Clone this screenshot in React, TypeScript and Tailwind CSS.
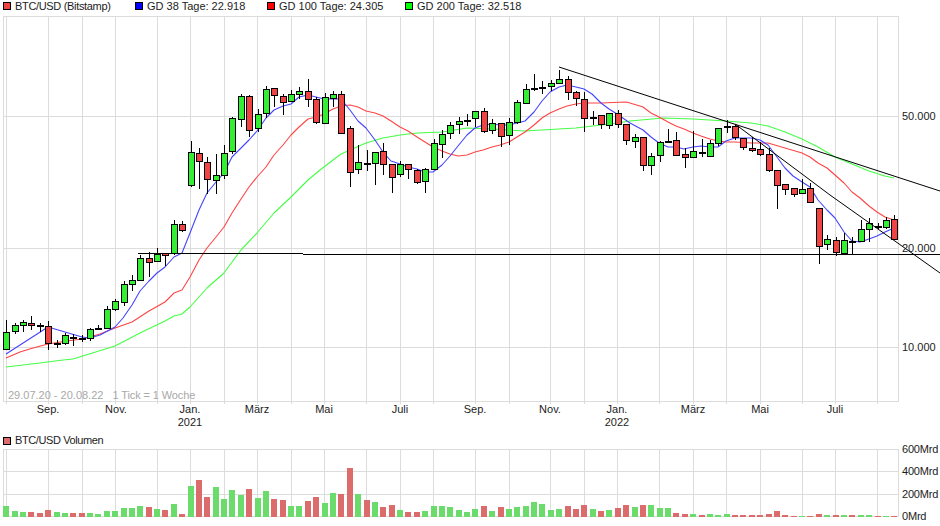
type C = [number, number, number, number, string];

const candles: C[] = [
  [332,349,320,349,"g"],[325,331,323,334,"g"],[322,325,320,332,"g"],[323,325,316,330,"r"],[325,327,323,332,"d"],[326,343,321,350,"r"],[343,345,340,348,"d"],[335,343,333,345,"g"],[337,338,334,346,"d"],[338,339,335,342,"d"],
  [329,338,328,341,"g"],[328,329,325,330,"d"],[309,328,306,328,"g"],[301,309,299,311,"g"],[284,302,281,306,"g"],[280,284,275,291,"g"],[258,280,255,280,"g"],[258,262,252,277,"r"],[254,261,248,262,"g"],[253,255,253,266,"r"],
  [224,253,220,255,"g"],[224,230,221,232,"r"],[152,185,141,187,"g"],[153,161,148,189,"r"],[162,179,157,194,"r"],[175,180,154,194,"g"],[153,175,145,179,"g"],[118,151,117,154,"g"],[96,119,94,127,"g"],[96,130,95,137,"r"],
  [114,128,109,132,"g"],[89,113,86,118,"g"],[88,95,88,107,"r"],[96,102,94,115,"r"],[94,101,90,102,"g"],[91,94,87,99,"g"],[91,99,79,107,"r"],[99,122,97,124,"r"],[97,123,93,123,"g"],[94,98,91,107,"g"],
  [94,133,91,133,"r"],[128,172,126,187,"r"],[162,169,145,174,"g"],[163,164,150,171,"d"],[152,163,152,185,"g"],[151,164,143,175,"r"],[164,177,164,193,"r"],[164,174,161,177,"g"],[164,169,164,179,"r"],[170,182,169,184,"r"],
  [169,181,168,193,"g"],[143,169,139,169,"g"],[134,144,130,158,"g"],[125,133,122,139,"g"],[121,124,117,134,"g"],[120,121,114,126,"d"],[111,118,111,127,"g"],[111,131,108,133,"r"],[123,130,119,134,"g"],[123,136,123,147,"r"],
  [122,135,118,145,"g"],[102,122,100,124,"g"],[89,103,84,104,"g"],[88,89,74,91,"d"],[87,88,81,94,"d"],[83,86,80,91,"g"],[79,83,70,84,"g"],[79,92,76,100,"r"],[92,98,91,106,"r"],[99,118,92,132,"r"],
  [117,118,111,125,"d"],[115,124,115,129,"r"],[113,125,113,129,"g"],[113,124,110,128,"r"],[124,140,124,145,"r"],[137,141,134,148,"g"],[137,165,137,171,"r"],[156,165,153,175,"g"],[142,155,141,162,"g"],[141,142,129,142,"d"],
  [140,155,132,155,"r"],[154,157,148,168,"r"],[151,157,131,157,"g"],[152,153,139,157,"d"],[143,156,140,156,"g"],[128,143,128,146,"g"],[126,127,120,133,"d"],[126,137,124,140,"r"],[138,147,138,150,"r"],[148,150,137,152,"r"],
  [149,154,142,156,"r"],[154,170,148,172,"r"],[170,185,170,209,"r"],[184,189,184,195,"r"],[188,194,188,197,"r"],[189,193,179,193,"g"],[188,202,183,202,"r"],[208,246,208,264,"r"],[239,244,235,250,"g"],[240,252,237,256,"r"],
  [240,253,233,253,"g"],[241,242,237,254,"d"],[229,241,220,242,"g"],[223,229,218,242,"g"],[226,227,223,229,"d"],[220,227,217,229,"g"],[219,239,215,239,"r"],
];

const volumes: [number, string][] = [
  [378,"g"],[393,"g"],[396,"g"],[396,"r"],[399,"r"],[390,"r"],[396,"g"],[399,"g"],[399,"r"],[399,"r"],[399,"g"],[402,"g"],[393,"g"],[393,"g"],[384,"g"],[384,"g"],[378,"g"],[381,"r"],[387,"g"],[390,"r"],[372,"g"],[402,"r"],[318,"g"],[300,"r"],[351,"r"],[321,"g"],[357,"g"],[330,"g"],[345,"g"],[327,"r"],[354,"g"],[333,"g"],[357,"r"],[360,"r"],[378,"g"],[378,"g"],[363,"r"],[351,"r"],
  [369,"g"],[339,"g"],[342,"r"],[264,"r"],[342,"g"],[360,"r"],[366,"g"],[381,"r"],[375,"r"],[390,"g"],[396,"r"],[396,"r"],[393,"g"],[378,"g"],[378,"g"],[381,"g"],[390,"g"],[396,"g"],[387,"g"],[378,"r"],[393,"g"],[381,"r"],[387,"g"],[381,"g"],[378,"g"],[366,"g"],[372,"g"],[390,"g"],[387,"g"],[378,"r"],[387,"r"],[375,"r"],[387,"g"],[393,"r"],[390,"g"],[384,"r"],[375,"r"],
  [381,"g"],[375,"r"],[375,"g"],[384,"g"],[384,"g"],[399,"r"],[402,"r"],[402,"g"],[405,"r"],[402,"g"],[405,"g"],[402,"g"],[405,"r"],[405,"r"],[405,"r"],[405,"r"],[402,"r"],[393,"r"],[405,"r"],[408,"r"],[408,"g"],[408,"r"],[402,"r"],[405,"g"],[405,"r"],[405,"g"],[405,"r"],[405,"g"],[405,"g"],[408,"r"],[408,"g"],[408,"r"],
];

const blue = "6,354 48,327 82,337 90,338 100,335 115,327 123,318 132,305 140,291 149,281 157,273 165,267 174,257 182,253 190,233 199,210 207,193 216,182 224,173 232,157 241,148 249,140 257,131 266,118 274,110 283,106 291,104 299,97 308,95 316,97 324,99 341,99 350,110 358,121 366,128 375,140 383,152 391,161 400,164 408,167 417,169 425,172 433,172 442,165 450,156 458,146 467,135 475,128 483,125 492,124 500,125 509,125 517,123 525,121 534,112 542,101 550,92 559,87 567,85 576,87 584,89 592,94 601,103 609,109 617,114 630,123 643,130 651,137 659,143 668,147 676,147 684,149 693,147 701,146 710,147 718,147 726,141 735,138 743,138 751,138 760,140 768,145 777,157 785,168 793,176 802,182 810,187 818,200 827,210 835,218 844,232 852,241 860,242 869,239 877,236 885,232 894,228";
const red = "6,358 20,352 33,348 48,344 67,341 82,339 100,334 115,328 132,322 149,311 165,302 174,293 182,290 190,277 199,260 207,248 216,237 224,227 232,213 241,199 249,187 257,177 266,167 274,155 283,145 291,135 299,127 308,119 316,117 324,114 333,109 341,106 350,105 358,107 366,111 375,113 383,116 391,121 400,127 408,131 417,137 425,142 433,147 442,151 450,154 458,156 467,155 475,152 483,150 492,147 500,145 509,142 517,137 525,132 534,125 542,118 550,113 559,109 567,106 576,104 584,103 601,103 626,102 630,103 643,107 651,113 659,117 668,122 676,126 684,129 693,133 701,136 710,139 718,141 726,142 735,142 751,143 768,143 785,148 802,153 810,157 818,163 827,168 835,175 844,183 852,192 860,198 869,206 877,212 885,217 894,220";
const green = "6,367 40,363 63,360 73,359 115,346 140,333 165,321 174,316 182,314 190,307 199,297 207,288 224,273 232,262 241,250 257,233 274,213 291,197 308,180 320,170 333,160 341,154 350,150 366,143 383,138 400,135 417,133 442,132 467,128 492,129 525,131 542,130 559,129 576,128 601,125 617,123 630,121 663,118 693,119 726,121 751,123 768,126 785,132 802,139 818,147 835,157 852,164 869,171 885,176 894,178";

const gridX = [3,6,48,82,115,157,190,224,257,291,324,366,400,433,475,509,550,584,617,659,693,726,760,802,835,877,898];
const cx = (i: number) => Math.round(6.3 + 8.377 * i);

const months = [
  ["Sep.",48],["Nov.",116],["Jan.",190],["März",257],["Mai",324],["Juli",400],["Sep.",475],["Nov.",550],["Jan.",617],["März",693],["Mai",760],["Juli",835],
] as const;

function LegendItem({ color, label, width, tracking = "" }: { color: string; label: string; width: string; tracking?: string }) {
  return (
    <div className={`flex items-center gap-[4px] ${width}`}>
      <span className={`block w-2 h-2 border border-black ${color}`} />
      <span className={tracking}>{label}</span>
    </div>
  );
}

export default function App() {
  return (
    <div
      className="relative w-[940px] h-[526px] overflow-hidden bg-white text-[11px] leading-none text-[#1c1c1c] flex flex-col"
      style={{ fontFamily: '"Liberation Sans", Arial, sans-serif' }}
    >
      <div className="flex items-center h-[16px] pl-[3px] pb-[4px]">
        <LegendItem color="bg-[#ee4444]" label="BTC/USD (Bitstamp)" width="w-[132px]" tracking="tracking-[-0.33px]" />
        <LegendItem color="bg-[#0000ff]" label="GD 38 Tage: 22.918" width="w-[132px]" />
        <LegendItem color="bg-[#ff0000]" label="GD 100 Tage: 24.305" width="w-[138px]" />
        <LegendItem color="bg-[#00ff00]" label="GD 200 Tage: 32.518" width="w-[138px]" />
      </div>

      <div className="relative h-[388px]">
        <svg width="940" height="388" viewBox="0 16 940 388" className="block">
          <g stroke="#dcdcdc" strokeWidth="1" shapeRendering="crispEdges">
            {gridX.map((x) => (
              <line key={x} x1={x + 0.5} x2={x + 0.5} y1={16} y2={x === 3 || x === 898 ? 402 : 404} />
            ))}
            {[16.5, 116.5, 248.5, 347.5, 401.5].map((y) => (
              <line key={y} x1={3} x2={899} y1={y} y2={y} />
            ))}
          </g>
          <polyline points={green} fill="none" stroke="#44ff44" strokeWidth="1.1" strokeLinejoin="round" />
          <polyline points={red} fill="none" stroke="#ff4444" strokeWidth="1.1" strokeLinejoin="round" />
          <polyline points={blue} fill="none" stroke="#4444ff" strokeWidth="1.1" strokeLinejoin="round" />
          {candles.map(([t, b, wt, wb, c], i) => {
            const x = cx(i);
            return (
              <g key={i} shapeRendering="crispEdges">
                <line x1={x + 0.5} x2={x + 0.5} y1={wt} y2={wb} stroke="#000" strokeWidth="1" />
                {c === "d" ? (
                  <rect x={x - 3} y={t} width={7} height={2} fill="#000" />
                ) : (
                  <rect
                    x={x - 2.5}
                    y={t + 0.5}
                    width={6}
                    height={b - t}
                    fill={c === "g" ? "#33ee33" : "#ee4444"}
                    stroke="#000"
                    strokeWidth="1"
                  />
                )}
              </g>
            );
          })}
          <g fill="none" stroke="#000" strokeWidth="1">
            <line x1={138} x2={303} y1={253.5} y2={253.5} shapeRendering="crispEdges" />
            <line x1={303} x2={940} y1={254.5} y2={254.5} shapeRendering="crispEdges" />
            <line x1={559} y1={67} x2={940} y2={191} />
            <polyline points="735,124 810,180 830,195 940,273" />
          </g>
        </svg>
        {[["50.000", 100],["20.000", 232],["10.000", 331]].map(([t, y]) => (
          <span key={t as string} className="absolute left-[902px]" style={{ top: (y as number) - 5 }}>{t}</span>
        ))}
        <div className="absolute left-[8px] top-[374px] flex gap-[9px] text-[#a8a8a8]">
          <span>29.07.20 - 20.08.22</span>
          <span className="tracking-[-0.1px]">1 Tick = 1 Woche</span>
        </div>
      </div>

      <div className="relative h-[27px]">
        {months.map(([m, x]) => (
          <span key={m + x} className="absolute top-0 w-[50px] -ml-[25px] text-center" style={{ left: x }}>{m}</span>
        ))}
        <span className="absolute top-[13px] left-[190px] w-[50px] -ml-[25px] text-center">2021</span>
        <span className="absolute top-[13px] left-[617px] w-[50px] -ml-[25px] text-center">2022</span>
      </div>

      <div className="flex items-center h-[18px] pl-[3px] pt-[1px]">
        <LegendItem color="bg-[#dc6b6b]" label="BTC/USD Volumen" width="w-[132px]" tracking="tracking-[-0.4px]" />
      </div>

      <div className="relative h-[77px]">
        <svg width="940" height="77" viewBox="0 449 940 77" className="block">
          <g stroke="#dcdcdc" strokeWidth="1" shapeRendering="crispEdges">
            {gridX.map((x) => (
              <line key={x} x1={x + 0.5} x2={x + 0.5} y1={449} y2={517} />
            ))}
            {[449.5, 471.5, 494.5, 516.5].map((y) => (
              <line key={y} x1={3} x2={899} y1={y} y2={y} />
            ))}
          </g>
          <g shapeRendering="crispEdges">
            {volumes.map(([t, c], i) => {
              const top = Math.round(380 + t / 3);
              return (
                <rect key={i} x={cx(i) - 3} y={top} width={6} height={517 - top} fill={c === "g" ? "#6bdc6b" : "#dc6b6b"} />
              );
            })}
          </g>
        </svg>
        {[["600Mrd", 444],["400Mrd", 466],["200Mrd", 489],["0Mrd", 511]].map(([t, y]) => (
          <span key={t as string} className="absolute left-[902px] tracking-[-0.2px]" style={{ top: (y as number) - 449 }}>{t}</span>
        ))}
      </div>
    </div>
  );
}
